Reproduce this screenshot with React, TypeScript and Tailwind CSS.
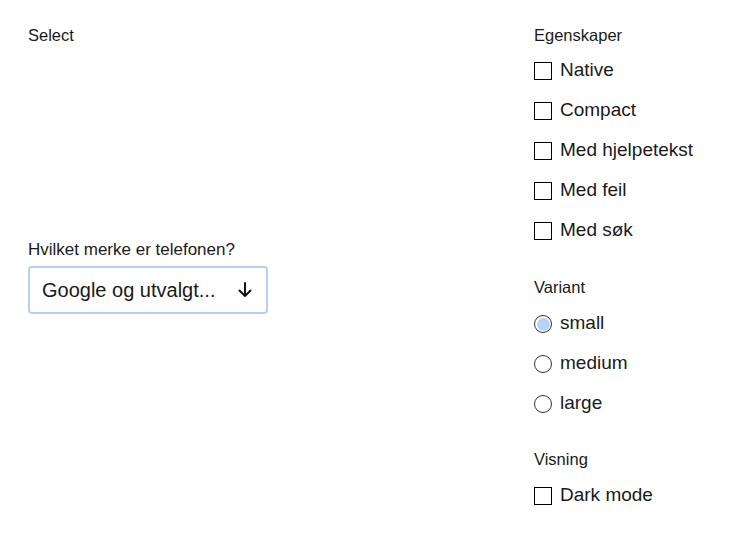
import React from "react";

const Checkbox = ({ label }: { label: string }) => (
  <div className="flex h-10 items-center">
    <span className="mt-[2px] box-border h-[18px] w-[18px] border-[1.5px] border-black bg-white" />
    <span className="ml-2 text-[19px] text-[#1a1a1a]">{label}</span>
  </div>
);

const Radio = ({ label, active }: { label: string; active?: boolean }) => (
  <div className="flex h-10 items-center">
    <span className="mt-[2px] box-border flex h-[18px] w-[18px] items-center justify-center rounded-full border border-[#333] bg-white">
      {active && <span className="h-[13px] w-[13px] rounded-full bg-[#b5d2fb]" />}
    </span>
    <span className="ml-2 text-[19px] text-[#1a1a1a]">{label}</span>
  </div>
);

export default function App() {
  return (
    <div className="flex h-[552px] w-[750px] bg-white px-7 pt-6 font-['Liberation_Sans',sans-serif] text-[#1a1a1a]">
      <div className="flex w-[506px] flex-col">
        <div className="text-[16.5px] leading-[22px]">Select</div>
        <div className="mt-[193px] text-[17px] leading-[22px]">Hvilket merke er telefonen?</div>
        <div className="mt-[5px] box-border flex h-[48px] w-[240px] items-center justify-between rounded-[4px] border-2 border-[#b7cff3] pl-3 pr-3">
          <span className="text-[20px] text-[#1a1a1a]">Google og utvalgt...</span>
          <svg width="18" height="18" viewBox="0 0 18 18" fill="none" stroke="#111" strokeWidth="2" strokeLinecap="round" strokeLinejoin="round">
            <path d="M9 2v13M3.5 9.5L9 15l5.5-5.5" />
          </svg>
        </div>
      </div>
      <div className="flex flex-col">
        <div className="text-[16.5px] leading-[22px]">Egenskaper</div>
        <div className="mt-1 flex flex-col">
          <Checkbox label="Native" />
          <Checkbox label="Compact" />
          <Checkbox label="Med hjelpetekst" />
          <Checkbox label="Med feil" />
          <Checkbox label="Med søk" />
        </div>
        <div className="mt-[26px] text-[16.5px] leading-[22px]">Variant</div>
        <div className="mt-[5px] flex flex-col">
          <Radio label="small" active />
          <Radio label="medium" />
          <Radio label="large" />
        </div>
        <div className="mt-[25px] text-[16.5px] leading-[22px]">Visning</div>
        <div className="mt-[5px] flex flex-col">
          <Checkbox label="Dark mode" />
        </div>
      </div>
    </div>
  );
}
